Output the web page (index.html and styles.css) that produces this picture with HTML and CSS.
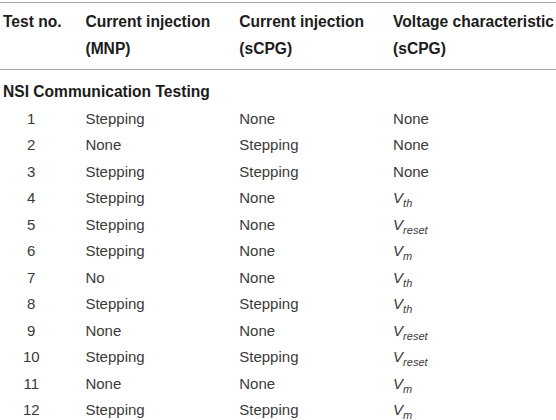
FILE: index.html
```html
<!DOCTYPE html>
<html>
<head>
<meta charset="utf-8">
<link rel="stylesheet" href="styles.css">
</head>
<body>
<table class="tbl">
  <thead>
    <tr>
      <th class="c1">Test no.</th>
      <th class="c2">Current injection<br>(MNP)</th>
      <th class="c3">Current injection<br>(sCPG)</th>
      <th class="c4">Voltage characteristic<br>(sCPG)</th>
    </tr>
  </thead>
  <tbody>
    <tr class="section"><td colspan="4">NSI Communication Testing</td></tr>
    <tr><td class="num">1</td><td>Stepping</td><td>None</td><td>None</td></tr>
    <tr><td class="num">2</td><td>None</td><td>Stepping</td><td>None</td></tr>
    <tr><td class="num">3</td><td>Stepping</td><td>Stepping</td><td>None</td></tr>
    <tr><td class="num">4</td><td>Stepping</td><td>None</td><td><i>V<sub>th</sub></i></td></tr>
    <tr><td class="num">5</td><td>Stepping</td><td>None</td><td><i>V<sub>reset</sub></i></td></tr>
    <tr><td class="num">6</td><td>Stepping</td><td>None</td><td><i>V<sub>m</sub></i></td></tr>
    <tr><td class="num">7</td><td>No</td><td>None</td><td><i>V<sub>th</sub></i></td></tr>
    <tr><td class="num">8</td><td>Stepping</td><td>Stepping</td><td><i>V<sub>th</sub></i></td></tr>
    <tr><td class="num">9</td><td>None</td><td>None</td><td><i>V<sub>reset</sub></i></td></tr>
    <tr><td class="num">10</td><td>Stepping</td><td>Stepping</td><td><i>V<sub>reset</sub></i></td></tr>
    <tr><td class="num">11</td><td>None</td><td>None</td><td><i>V<sub>m</sub></i></td></tr>
    <tr><td class="num">12</td><td>Stepping</td><td>Stepping</td><td><i>V<sub>m</sub></i></td></tr>
  </tbody>
</table>
</body>
</html>
```

FILE: styles.css
```css
html, body {
  margin: 0;
  padding: 0;
  background: #ffffff;
}
body {
  padding-top: 2px;
  font-family: "Liberation Sans", Arial, sans-serif;
  font-size: 15px;
  color: #3a3a3a;
}
.tbl {
  border-collapse: collapse;
  width: 556px;
  table-layout: fixed;
}
.tbl th, .tbl td {
  padding: 0 3px;
  text-align: left;
  vertical-align: top;
  line-height: 26.5px;
  white-space: nowrap;
}
.tbl thead tr {
  border-top: 1px solid #a6a6a6;
  border-bottom: 1px solid #a6a6a6;
}
.tbl th {
  font-weight: bold;
  font-size: 15.6px;
  color: #1c1c1c;
  padding-top: 6px;
  padding-bottom: 7px;
}
.c1 { width: 76px; }
.c2 { width: 147px; }
.c3 { width: 147px; }
.c4 { width: 159px; }
.section td {
  font-weight: bold;
  font-size: 15.6px;
  color: #1c1c1c;
  padding-top: 9px;
}
.tbl td.num {
  text-align: center;
  padding-right: 23px;
}
.tbl i {
  font-style: italic;
}
.tbl sub {
  font-size: 11px;
  vertical-align: -4px;
  line-height: 0;
}
```
